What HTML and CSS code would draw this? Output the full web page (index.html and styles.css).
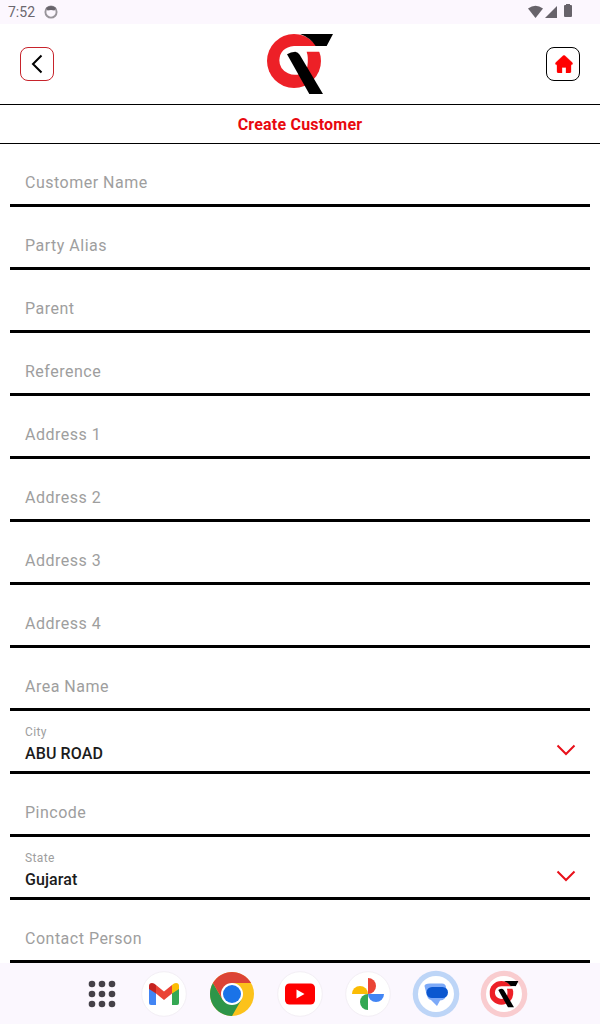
FILE: index.html
```html
<!DOCTYPE html>
<html lang="en">
<head>
<meta charset="utf-8">
<title>Create Customer</title>
<link rel="stylesheet" href="styles.css">
</head>
<body>
<svg class="defs" width="0" height="0">
  <symbol id="logo" viewBox="51 30 198 180">
    <circle cx="132" cy="111" r="81" fill="#ed2027"/>
    <path d="M150 30H249L230 66H197Q180 40 150 30Z" fill="#000"/>
    <path d="M132 66H231L222 83H170Q176 100 172 128L150 150Q132 156 114 148Q88 136 88 109Q90 70 132 66Z" fill="#fff"/>
    <path d="M111 91Q122 83 136 83Q144 84 149 92L219 210H178Z" fill="#000"/>
  </symbol>
  <symbol id="chevron" viewBox="0 0 20 12"><path d="M1.5 1.5L10 10L18.500 1.500" fill="none" stroke="#e8101a" stroke-width="2"/></symbol>
</svg>
<div class="screen">
  <div class="status">
    <span class="time">7:52</span>
    <svg class="sync" width="14" height="14" viewBox="0 0 14 14"><circle cx="7" cy="7" r="5.600" fill="none" stroke="#99959b" stroke-width="1.900"/><path d="M2 3Q7-1 12 3L10.500 5.500Q7 4.500 3.500 5.500Z" fill="#68646b"/></svg>
    <svg class="signals" width="46" height="16" viewBox="0 0 46 16"><g fill="#67636a"><path d="M0 4.500Q7.500-1 15 4.500L7.500 14Z"/><path d="M29 2V14H17Z"/><path d="M38 0H42V1H43Q44 1 44 2V12Q44 13 43 13H37Q36 13 36 12V2Q36 1 37 1H38Z"/></g></svg>
  </div>
  <header class="header">
    <button class="button back" aria-label="Back"><svg width="12" height="20" viewBox="0 0 12 20"><path d="M10.500 1.500L2 10L10.500 18.500" fill="none" stroke="#000" stroke-width="2"/></svg></button>
    <svg class="brand" width="66" height="60"><use href="#logo"/></svg>
    <button class="button home" aria-label="Home"><svg width="18" height="18" viewBox="0 0 18 18"><path d="M9 .3Q9.500 .3 10 .8L17.200 7.500Q18.300 9.500 16.500 9.800H16V16.500Q16 18 14.500 18H11V12.500H7V18H3.500Q2 18 2 16.500V9.800H1.500Q-.3 9.500.8 7.500L8 .8Q8.500 .3 9 .3Z" fill="red" stroke="red" stroke-width=".3"/></svg></button>
  </header>
  <h1 class="title">Create Customer</h1>
  <main class="form">
    <div class="field">Customer Name</div>
    <div class="field">Party Alias</div>
    <div class="field">Parent</div>
    <div class="field">Reference</div>
    <div class="field">Address 1</div>
    <div class="field">Address 2</div>
    <div class="field">Address 3</div>
    <div class="field">Address 4</div>
    <div class="field">Area Name</div>
    <div class="field select"><div><div class="label">City</div><div class="value">ABU ROAD</div></div><svg class="arrow" width="20" height="12"><use href="#chevron"/></svg></div>
    <div class="field">Pincode</div>
    <div class="field select"><div><div class="label">State</div><div class="value">Gujarat</div></div><svg class="arrow" width="20" height="12"><use href="#chevron"/></svg></div>
    <div class="field">Contact Person</div>
  </main>
  <nav class="dock">
    <svg class="app" viewBox="-6 0 48 48"><g fill="#454148"><circle cx="14" cy="14" r="3.300"/><circle cx="24" cy="14" r="3.300"/><circle cx="34" cy="14" r="3.300"/><circle cx="14" cy="24" r="3.300"/><circle cx="24" cy="24" r="3.300"/><circle cx="34" cy="24" r="3.300"/><circle cx="14" cy="34" r="3.300"/><circle cx="24" cy="34" r="3.300"/><circle cx="34" cy="34" r="3.300"/></g></svg>
    <svg class="app" viewBox="0 0 48 48"><circle cx="24" cy="24" r="22.300" fill="#fff" stroke="#f3eff5"/><path d="M9 18L16 23V35H11Q9 35 9 33Z" fill="#4285f4"/><path d="M39 18L32 23V35H37Q39 35 39 33Z" fill="#34a853"/><path d="M16 15L24 21.500L32 15V23.500L24 30L16 23.500Z" fill="#ea4335"/><path d="M9 19V16Q9 13 12 13Q14 13 16 15V23.500Z" fill="#c5221f"/><path d="M39 19V16Q39 13 36 13Q34 13 32 15V23.500Z" fill="#fbbc04"/></svg>
    <svg class="app" viewBox="0 0 48 48"><circle cx="24" cy="24" r="22" fill="#fcc21b"/><path d="M4.950 13A22 22 0 0 0 24 46L33.500 29.500L14.500 29.500Z" fill="#2d9549"/><path d="M4.950 13A22 22 0 0 1 43.050 13H24L14.500 29.500Z" fill="#dc4336"/><circle cx="24" cy="24" r="11" fill="#fff"/><circle cx="24" cy="24" r="9" fill="#1a73e8"/></svg>
    <svg class="app" viewBox="0 0 48 48"><circle cx="24" cy="24" r="22.300" fill="#fff" stroke="#f3eff5"/><rect x="9" y="13.500" width="30" height="21" rx="4.500" fill="red"/><path d="M20.500 19.500L28.500 24L20.500 28.500Z" fill="#fff"/></svg>
    <svg class="app" viewBox="0 0 48 48"><circle cx="24" cy="24" r="22.300" fill="#fff" stroke="#f3eff5"/><path d="M24 8A8 8 0 0 1 24 24Z" fill="#ea4335"/><path d="M24 24H40A8 8 0 0 1 24 24Z" fill="#4285f4"/><path d="M24 24V40A8 8 0 0 1 24 24Z" fill="#34a853"/><path d="M8 24A8 8 0 0 1 24 24Z" fill="#fbbc04"/></svg>
    <svg class="app" viewBox="0 0 48 48"><circle cx="24" cy="24" r="23.300" fill="#bdd5f7"/><circle cx="24" cy="24" r="18" fill="#fff"/><path d="M18 13.500H30Q33.500 13.500 34 17V24Q34 30 28 30.500L25 36L19 30Q15 29 14 22L12.500 16Q12.500 13.500 18 13.500Z" fill="#7daaf8"/><rect x="14.500" y="17" width="21.500" height="11" rx="5.500" fill="#0b57d0"/></svg>
    <svg class="app" viewBox="0 0 48 48"><circle cx="24" cy="24" r="23.300" fill="#f9cccf"/><circle cx="24" cy="24" r="18" fill="#fff"/><use href="#logo" x="9.500" y="11" width="29" height="26.400"/></svg>
  </nav>
</div>
</body>
</html>
```
FILE: styles.css
```css
* { box-sizing: border-box; }
body { margin: 0; background: #fff; font-family: Roboto, sans-serif; }
.defs { display: none; }
.screen { width: 600px; height: 1024px; display: flex; flex-direction: column; overflow: hidden; }
.status { height: 24px; background: #fcf7fe; display: flex; align-items: center; padding: 0 26px 0 8px; color: #6b676e; }
.time { font-size: 14px; line-height: 24px; letter-spacing: 0; }
.sync { margin-left: 9px; }
.signals { margin-left: auto; }
.header { height: 80px; padding: 0 20px; display: flex; align-items: center; justify-content: space-between; }
.button { width: 34px; height: 34px; padding: 0; border: 1px solid #000; border-radius: 8px; background: #fff; display: flex; align-items: center; justify-content: center; }
.back { border-color: #c7232b; }
.home { padding-left: 1px; }
.title { height: 40px; margin: 0; border-top: 1px solid #000; border-bottom: 1px solid #000; text-align: center; color: #e8080f; font-size: 16px; font-weight: 700; line-height: 39px; letter-spacing: .2px; }
.form { padding: 0 10px; }
.field { height: 63px; border-bottom: 3px solid #000; padding: 17px 15px 0; font-size: 16px; line-height: 43px; letter-spacing: .5px; color: #9e9e9e; }
.select { display: flex; justify-content: space-between; padding: 13px 14px 0 15px; }
.label { font-size: 12px; line-height: 16px; letter-spacing: .4px; }
.value { color: #1b1b1b; font-weight: 500; line-height: 28px; letter-spacing: .1px; }
.arrow { margin-top: 20px; }
.dock { height: 61px; background: #fbf7fe; display: flex; justify-content: center; gap: 20px; padding: 7px 0 0; }
.app { width: 48px; height: 48px; flex: none; }
```
